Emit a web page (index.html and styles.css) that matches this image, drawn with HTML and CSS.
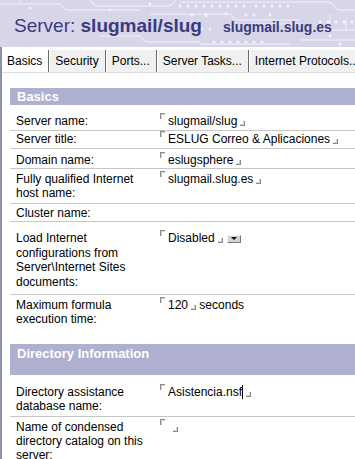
FILE: index.html
```html
<!DOCTYPE html>
<html>
<head>
	<meta charset="utf-8">
	<title>Server: slugmail/slug</title>
	<link rel="stylesheet" href="styles.css">
</head>
<body>
	<div class="header">
		<svg class="circuit" width="355" height="47" viewBox="0 0 355 47">
			<g stroke="#e9e9f3" stroke-width="1.5" fill="none">
				<path d="M0 4 H60 L66 10 H140"/>
				<path d="M20 0 V3 M90 0 L96 6 H170 L176 0"/>
				<path d="M150 14 H230 L236 20 H300"/>
				<path d="M180 2 H330 L338 10 H355"/>
				<path d="M250 24 H300 L306 30 H355"/>
				<path d="M300 40 H355 M200 44 H290"/>
				<path d="M330 14 V24 M346 18 V30"/>
				<path d="M100 36 H140 L146 42 H200"/>
			</g>
			<g fill="#f2f2f8">
				<circle cx="180" cy="6" r="1.6"/><circle cx="188" cy="6" r="1.6"/><circle cx="196" cy="6" r="1.6"/>
				<circle cx="204" cy="6" r="1.6"/><circle cx="212" cy="6" r="1.6"/><circle cx="220" cy="6" r="1.6"/>
				<circle cx="228" cy="6" r="1.6"/><circle cx="236" cy="6" r="1.6"/><circle cx="244" cy="6" r="1.6"/>
				<circle cx="256" cy="6" r="1.6"/><circle cx="264" cy="6" r="1.6"/><circle cx="272" cy="6" r="1.6"/>
				<circle cx="280" cy="6" r="1.6"/><circle cx="288" cy="6" r="1.6"/>
				<circle cx="192" cy="15" r="1.6"/><circle cx="206" cy="15" r="2"/><circle cx="226" cy="14" r="1.4"/>
				<circle cx="246" cy="15" r="1.6"/><circle cx="254" cy="15" r="1.6"/><circle cx="270" cy="15" r="1.4"/>
				<circle cx="214" cy="42" r="1.6"/><circle cx="222" cy="42" r="1.6"/><circle cx="230" cy="42" r="1.6"/>
				<circle cx="238" cy="42" r="1.6"/><circle cx="246" cy="42" r="1.6"/><circle cx="254" cy="42" r="1.6"/>
				<circle cx="262" cy="42" r="1.6"/><circle cx="210" cy="29" r="1.5"/><circle cx="202" cy="29" r="1.5"/>
				<circle cx="320" cy="22" r="1.6"/><circle cx="328" cy="22" r="1.6"/><circle cx="336" cy="22" r="1.6"/>
				<circle cx="344" cy="22" r="1.6"/><circle cx="352" cy="22" r="1.6"/>
				<circle cx="330" cy="36" r="1.4"/><circle cx="340" cy="44" r="1.4"/>
				<circle cx="30" cy="8" r="1.4"/><circle cx="110" cy="10" r="1.4"/><circle cx="150" cy="4" r="1.4"/>
			</g>
		</svg>
		<h1 class="title">Server: <b>slugmail/slug</b></h1>
		<span class="host">slugmail.slug.es</span>
	</div>

	<div class="main">
		<div class="tabs">
			<div class="tab first active">Basics</div>
			<div class="tab">Security</div>
			<div class="tab">Ports...</div>
			<div class="tab">Server Tasks...</div>
			<div class="tab">Internet Protocols...</div>
		</div>

		<div class="form">
			<div class="bar">Basics</div>

			<div class="row r1 nb">
				<div class="label">Server name:</div>
				<div class="value"><span class="field">slugmail/slug</span></div>
			</div>
			<div class="row r2">
				<div class="label">Server title:</div>
				<div class="value"><span class="field">ESLUG Correo &amp; Aplicaciones</span></div>
			</div>
			<div class="row r3">
				<div class="label">Domain name:</div>
				<div class="value"><span class="field">eslugsphere</span></div>
			</div>
			<div class="row r4">
				<div class="label">Fully qualified Internet host name:</div>
				<div class="value"><span class="field">slugmail.slug.es</span></div>
			</div>
			<div class="row r5">
				<div class="label">Cluster name:</div>
				<div class="value"></div>
			</div>
			<div class="row r6">
				<div class="label">Load Internet configurations from Server\Internet Sites documents:</div>
				<div class="value"><span class="field">Disabled</span><span class="drop"></span></div>
			</div>
			<div class="row r7">
				<div class="label">Maximum formula execution time:</div>
				<div class="value"><span class="field">120</span> seconds</div>
			</div>

			<div class="bar tall">Directory Information</div>

			<div class="row r8 nb">
				<div class="label">Directory assistance database name:</div>
				<div class="value"><span class="field">Asistencia.nsf<span class="caret"></span></span></div>
			</div>
			<div class="row r9">
				<div class="label">Name of condensed directory catalog on this server:</div>
				<div class="value"><span class="field empty"></span></div>
			</div>
		</div>
	</div>
</body>
</html>
```

FILE: styles.css
```css
body {
	margin: 0;
	font-family: "Liberation Sans", Arial, sans-serif;
	font-size: 12px;
	color: #000;
	background: #fff;
	overflow: hidden;
}

/* header */
.header {
	position: relative;
	height: 47px;
	box-sizing: border-box;
	padding: 15px 0 0 14px;
	background: #d6d6e8;
	display: flex;
	align-items: baseline;
	overflow: hidden;
}
.circuit {
	position: absolute;
	left: 0;
	top: 0;
}
.title {
	position: relative;
	margin: 0;
	font-size: 19px;
	line-height: 22px;
	font-weight: normal;
	color: #3a3a80;
	white-space: nowrap;
}
.title b { font-weight: bold; }
.host {
	position: relative;
	margin-left: 21px;
	font-size: 14px;
	font-weight: bold;
	color: #3a3a80;
	white-space: nowrap;
}

/* page body */
.main {
	border-left: 2px solid #8b91ab;
	height: 412px;
}

.tabs {
	display: flex;
	height: 26px;
	box-sizing: border-box;
	padding: 3px 0 0 2px;
	border-bottom: 1px solid #dedede;
	white-space: nowrap;
	overflow: hidden;
}
.tab {
	height: 21px;
	line-height: 21px;
	padding: 1px 6px 0 6px;
	background: #f0f0f0;
	border-right: 1px solid #6a6a6a;
	box-shadow: inset 1px 0 0 #fff;
}
.tab.first { padding-left: 3px; }
.tab.active { background: #fff; }

.form {
	margin-left: 8px;
	padding-top: 15px;
}

.bar {
	height: 17px;
	line-height: 17px;
	padding-left: 7px;
	background: #afafd0;
	color: #fff;
	font-size: 13px;
	font-weight: bold;
}
.bar.tall {
	height: 31px;
	box-sizing: border-box;
	padding-top: 2px;
	line-height: 15px;
}

.row {
	display: flex;
	line-height: 14px;
	border-top: 1px solid #c6c6c6;
}
.row.nb { border-top: none; }
.r1 { padding: 9px 0 2px; }
.r2 { padding: 1px 0 2px; }
.r3 { padding: 4px 0 1px; }
.r4 { padding: 3px 0 3px; }
.r5 { padding: 2px 0 1px; }
.r6 { padding: 9px 0 5px; line-height: 14.5px; }
.r7 { padding: 3px 0 18px; }
.r8 { padding: 10px 0 3px; }
.r9 { padding: 3px 0 10px; }

.label {
	width: 146px;
	flex: none;
	box-sizing: border-box;
	padding-left: 6px;
	padding-right: 6px;
}
.value {
	flex: 1;
	padding-left: 4px;
	white-space: nowrap;
}

/* Notes field delimiters */
.field::before {
	content: "";
	display: inline-block;
	width: 4px;
	height: 5px;
	margin-right: 3px;
	border-left: 1px solid #8a8a8a;
	border-top: 1px solid #8a8a8a;
	box-shadow: inset 1px 1px 0 #d4d4d4;
	vertical-align: top;
	position: relative;
	top: -1px;
}
.field::after {
	content: "";
	display: inline-block;
	width: 4px;
	height: 4px;
	margin-left: 3px;
	border-right: 1px solid #8a8a8a;
	border-bottom: 1px solid #8a8a8a;
	box-shadow: inset -1px -1px 0 #d4d4d4;
	vertical-align: -1px;
}
.field.empty::after { margin-left: 5px; }

.caret {
	display: inline-block;
	width: 1px;
	height: 14px;
	background: #000;
	vertical-align: -3px;
}

.drop {
	display: inline-block;
	position: relative;
	width: 12px;
	height: 6px;
	margin-left: 4px;
	background: #d4d4d4;
	border: 1px solid;
	border-color: #f4f4f4 #7a7a7a #7a7a7a #f4f4f4;
	vertical-align: -1px;
}
.drop::after {
	content: "";
	position: absolute;
	left: 3px;
	top: 1px;
	border-left: 3px solid transparent;
	border-right: 3px solid transparent;
	border-top: 3px solid #000;
}
```
